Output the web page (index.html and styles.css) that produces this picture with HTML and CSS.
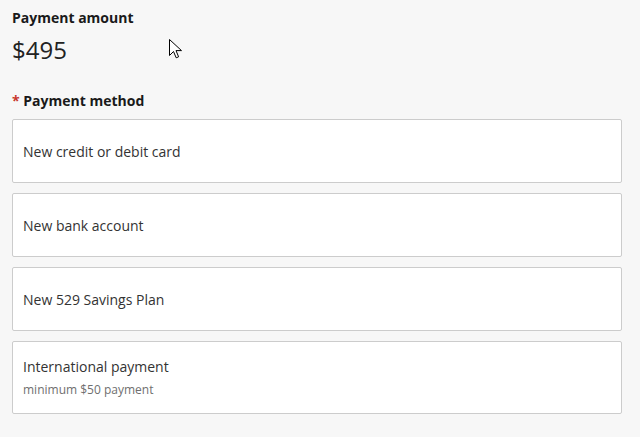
FILE: index.html
```html
<!DOCTYPE html>
<html lang="en">
  <head>
    <meta charset="UTF-8" />
    <title>Payment</title>
    <link rel="stylesheet" href="styles.css">
  </head>
  <body>
    <div class="page">
      <div class="amount">
        <h3 class="label">Payment amount</h3>
        <div class="value">$495</div>
      </div>
      <div class="method">
        <h3 class="label"><span class="req">*</span> Payment method</h3>
        <div class="options">
          <div class="option">New credit or debit card</div>
          <div class="option">New bank account</div>
          <div class="option">New 529 Savings Plan</div>
          <div class="option tall">
            <div>International payment</div>
            <div class="note">minimum $50 payment</div>
          </div>
        </div>
      </div>
    </div>
    <svg class="cursor" width="13" height="20" viewBox="0 0 13 20">
      <path d="M0.5 0.5 L0.5 16.5 L4.5 12.5 L7.2 18.8 L9.6 17.8 L7 11.6 L12.5 11.6 Z" fill="#fff" stroke="#000" stroke-width="1" stroke-linejoin="miter" />
    </svg>
  </body>
</html>
```

FILE: styles.css
```css
* {
  margin: 0;
  padding: 0;
  box-sizing: border-box;
}

body {
  font-family: "Open Sans", sans-serif;
  background: #f7f7f7;
  color: #222;
  height: 100vh;
}

.page {
  padding: 8px 18px 0 12px;
  display: flex;
  flex-direction: column;
  gap: 26px;
}

.label {
  font-size: 14px;
  font-weight: 700;
  line-height: 20px;
  color: #1a1a1a;
}

.value {
  font-size: 24px;
  line-height: 30px;
  margin-top: 7px;
  color: #222;
}

.req {
  color: #c8372d;
}

.options {
  margin-top: 8px;
  display: flex;
  flex-direction: column;
  gap: 10px;
}

.option {
  background: #fff;
  border: 1px solid #ccc;
  border-radius: 2px;
  min-height: 64px;
  padding: 13px 10px 11px;
  display: flex;
  flex-direction: column;
  justify-content: center;
  font-size: 14px;
  line-height: 20px;
  color: #333;
}

.option.tall {
  padding: 15px 10px;
}

.note {
  font-size: 12px;
  line-height: 16px;
  margin-top: 5px;
  color: #6f6f6f;
}

.cursor {
  position: absolute;
  left: 169px;
  top: 39px;
}
```
